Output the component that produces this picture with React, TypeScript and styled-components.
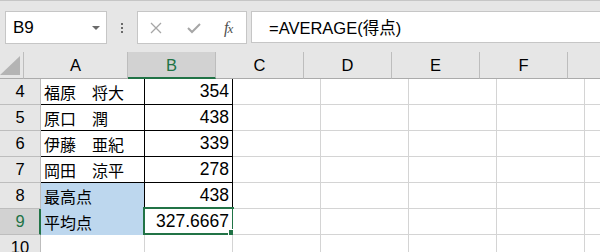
import React from 'react';
import styled, { createGlobalStyle } from 'styled-components';

const GlobalStyle = createGlobalStyle`
  html, body {
    margin: 0;
    padding: 0;
    background: #ffffff;
    overflow: hidden;
  }
  body {
    font-family: "Liberation Sans", "Noto Sans CJK JP", sans-serif;
  }
`;

const GREEN = '#217346';
const GRID = '#d4d4d4';
const BLACK = '#000000';
const FILL = '#bdd7ee';

const columns = [
  { key: 'A', width: 104 },
  { key: 'B', width: 88 },
  { key: 'C', width: 88 },
  { key: 'D', width: 88 },
  { key: 'E', width: 88 },
  { key: 'F', width: 88 },
  { key: 'G', width: 88 },
];

type CellData = {
  text?: string;
  num?: boolean;
  right?: string;
  bottom?: string;
  fill?: string;
  selected?: boolean;
};

// 罫線・塗りは行ごとに定義
const rows: { n: number; cells: Record<string, CellData> }[] = [
  { n: 4, cells: { A: { text: '福原　将大', right: BLACK, bottom: BLACK }, B: { text: '354', num: true, right: BLACK, bottom: BLACK } } },
  { n: 5, cells: { A: { text: '原口　潤', right: BLACK, bottom: BLACK }, B: { text: '438', num: true, right: BLACK, bottom: BLACK } } },
  { n: 6, cells: { A: { text: '伊藤　亜紀', right: BLACK, bottom: BLACK }, B: { text: '339', num: true, right: BLACK, bottom: BLACK } } },
  { n: 7, cells: { A: { text: '岡田　涼平', right: BLACK, bottom: BLACK }, B: { text: '278', num: true, right: BLACK, bottom: BLACK } } },
  { n: 8, cells: { A: { text: '最高点', fill: FILL, right: BLACK, bottom: FILL }, B: { text: '438', num: true, right: BLACK, bottom: BLACK } } },
  { n: 9, cells: { A: { text: '平均点', fill: FILL, right: FILL, bottom: FILL }, B: { text: '327.6667', num: true, selected: true } } },
  { n: 10, cells: {} },
];

export default function App() {
  return (
    <>
      <GlobalStyle />
      <SWindow>
        <SToolbar>
          <SNameBox>
            <span>B9</span>
            <SDropArrow />
          </SNameBox>
          <SDots>
            <i /><i /><i />
          </SDots>
          <SButtons>
            <SIconBtn>
              <svg width="12" height="12" viewBox="0 0 12 12">
                <path d="M1 1 L11 11 M11 1 L1 11" stroke="#a6a6a6" strokeWidth="1.3" fill="none" />
              </svg>
            </SIconBtn>
            <SIconBtn>
              <svg width="14" height="12" viewBox="0 0 14 12">
                <path d="M1 6 L5 10 L13 2" stroke="#a6a6a6" strokeWidth="2" fill="none" />
              </svg>
            </SIconBtn>
            <SFx>
              <i>f</i><i>x</i>
            </SFx>
          </SButtons>
          <SFormula>=AVERAGE(得点)</SFormula>
        </SToolbar>

        <SSheet>
          <SRow>
            <SCorner>
              <svg width="20" height="19" viewBox="0 0 20 19">
                <polygon points="20,0 20,19 0,19" fill="#b4b4b4" />
              </svg>
            </SCorner>
            {columns.map(col => (
              <SColHead key={col.key} width={col.width} active={col.key === 'B'}>
                {col.key === 'G' ? '' : col.key}
              </SColHead>
            ))}
          </SRow>

          {rows.map(row => (
            <SRow key={row.n}>
              <SRowHead active={row.n === 9}>{row.n}</SRowHead>
              {columns.map(col => {
                const c = row.cells[col.key] ?? {};
                return (
                  <SCell
                    key={col.key}
                    width={col.width}
                    num={!!c.num}
                    fill={c.fill}
                    rightColor={c.right ?? GRID}
                    bottomColor={c.bottom ?? GRID}
                  >
                    {c.text}
                    {c.selected && (
                      <SSelection>
                        <SHandle />
                      </SSelection>
                    )}
                  </SCell>
                );
              })}
            </SRow>
          ))}
        </SSheet>
      </SWindow>
    </>
  );
}

const SWindow = styled.div`
  width: 600px;
  height: 252px;
  overflow: hidden;
  background: #ffffff;
`;

const SToolbar = styled.div`
  height: 52px;
  box-sizing: border-box;
  background: #e6e6e6;
  border-top: 1px solid #c6c6c6;
  display: flex;
  align-items: flex-start;
  padding: 10px 0 0 5px;
  white-space: nowrap;
`;

const SNameBox = styled.div`
  width: 102px;
  height: 33px;
  box-sizing: border-box;
  background: #ffffff;
  border: 1px solid #c6c6c6;
  display: flex;
  align-items: center;
  justify-content: space-between;
  padding: 0 6px 0 7px;
  font-size: 17px;
  color: #000000;
`;

const SDropArrow = styled.div`
  width: 0;
  height: 0;
  border-left: 4px solid transparent;
  border-right: 4px solid transparent;
  border-top: 4px solid #6a6a6a;
`;

const SDots = styled.div`
  width: 30px;
  height: 33px;
  display: flex;
  flex-direction: column;
  align-items: center;
  justify-content: center;
  gap: 2px;

  i {
    display: block;
    width: 2px;
    height: 2px;
    background: #6a6a6a;
  }
`;

const SButtons = styled.div`
  width: 110px;
  height: 33px;
  box-sizing: border-box;
  background: #ffffff;
  border: 1px solid #c6c6c6;
  display: flex;
  align-items: center;
  padding-left: 12px;
`;

const SIconBtn = styled.div`
  width: 37px;
  display: flex;
  align-items: center;
  justify-content: flex-start;
`;

const SFx = styled.div`
  font-family: "Liberation Serif", serif;
  font-size: 16px;
  color: #505050;
  letter-spacing: -1px;

  i {
    font-style: italic;
  }
  i + i {
    font-size: 13px;
  }
`;

const SFormula = styled.div`
  margin-left: 4px;
  flex: 1;
  height: 32px;
  box-sizing: border-box;
  background: #ffffff;
  border: 1px solid #c6c6c6;
  border-right: none;
  display: flex;
  align-items: center;
  padding-left: 17px;
  font-size: 16.5px;
  color: #000000;
`;

const SSheet = styled.div`
  display: flex;
  flex-direction: column;
`;

const SRow = styled.div`
  display: flex;
  height: 26px;
  flex-shrink: 0;

  &:first-child {
    height: 27px;
  }
`;

const SCorner = styled.div`
  width: 41px;
  height: 27px;
  box-sizing: border-box;
  background: #e6e6e6;
  border-right: 1px solid #bdbdbd;
  border-bottom: 1px solid #ababab;
  display: flex;
  align-items: flex-end;
  justify-content: flex-end;
  padding: 0 3px 3px 0;
`;

const SColHead = styled.div<{ width: number; active: boolean }>`
  width: ${({ width }) => width}px;
  flex-shrink: 0;
  height: 27px;
  box-sizing: border-box;
  background: ${({ active }) => (active ? '#d2d2d2' : '#e6e6e6')};
  color: ${({ active }) => (active ? GREEN : '#000000')};
  border-right: 1px solid #bdbdbd;
  border-bottom: ${({ active }) => (active ? `2px solid ${GREEN}` : '1px solid #ababab')};
  display: flex;
  align-items: center;
  justify-content: center;
  padding-top: ${({ active }) => (active ? '1px' : '0')};
  font-size: 16.5px;
`;

const SRowHead = styled.div<{ active: boolean }>`
  width: 41px;
  flex-shrink: 0;
  height: 26px;
  box-sizing: border-box;
  background: ${({ active }) => (active ? '#d2d2d2' : '#e6e6e6')};
  color: ${({ active }) => (active ? GREEN : '#000000')};
  border-right: ${({ active }) => (active ? `2px solid ${GREEN}` : '1px solid #bdbdbd')};
  border-bottom: 1px solid #bdbdbd;
  display: flex;
  align-items: center;
  justify-content: center;
  padding-left: ${({ active }) => (active ? '1px' : '0')};
  font-size: 16.5px;
`;

const SCell = styled.div<{ width: number; num: boolean; fill?: string; rightColor: string; bottomColor: string }>`
  position: relative;
  width: ${({ width }) => width}px;
  flex-shrink: 0;
  height: 26px;
  box-sizing: border-box;
  background: ${({ fill }) => fill ?? '#ffffff'};
  border-right: 1px solid ${({ rightColor }) => rightColor};
  border-bottom: 1px solid ${({ bottomColor }) => bottomColor};
  display: flex;
  align-items: center;
  justify-content: ${({ num }) => (num ? 'flex-end' : 'flex-start')};
  padding: 0 3px 0 3px;
  font-size: ${({ num }) => (num ? '17.5px' : '16px')};
  color: #000000;
  white-space: nowrap;
`;

const SSelection = styled.div`
  position: absolute;
  left: -2px;
  top: -2px;
  width: 91px;
  height: 28px;
  box-sizing: border-box;
  border: 2px solid ${GREEN};
  pointer-events: none;
`;

const SHandle = styled.div`
  position: absolute;
  right: -4px;
  bottom: -4px;
  width: 6px;
  height: 6px;
  background: ${GREEN};
  border: 1px solid #ffffff;
`;
